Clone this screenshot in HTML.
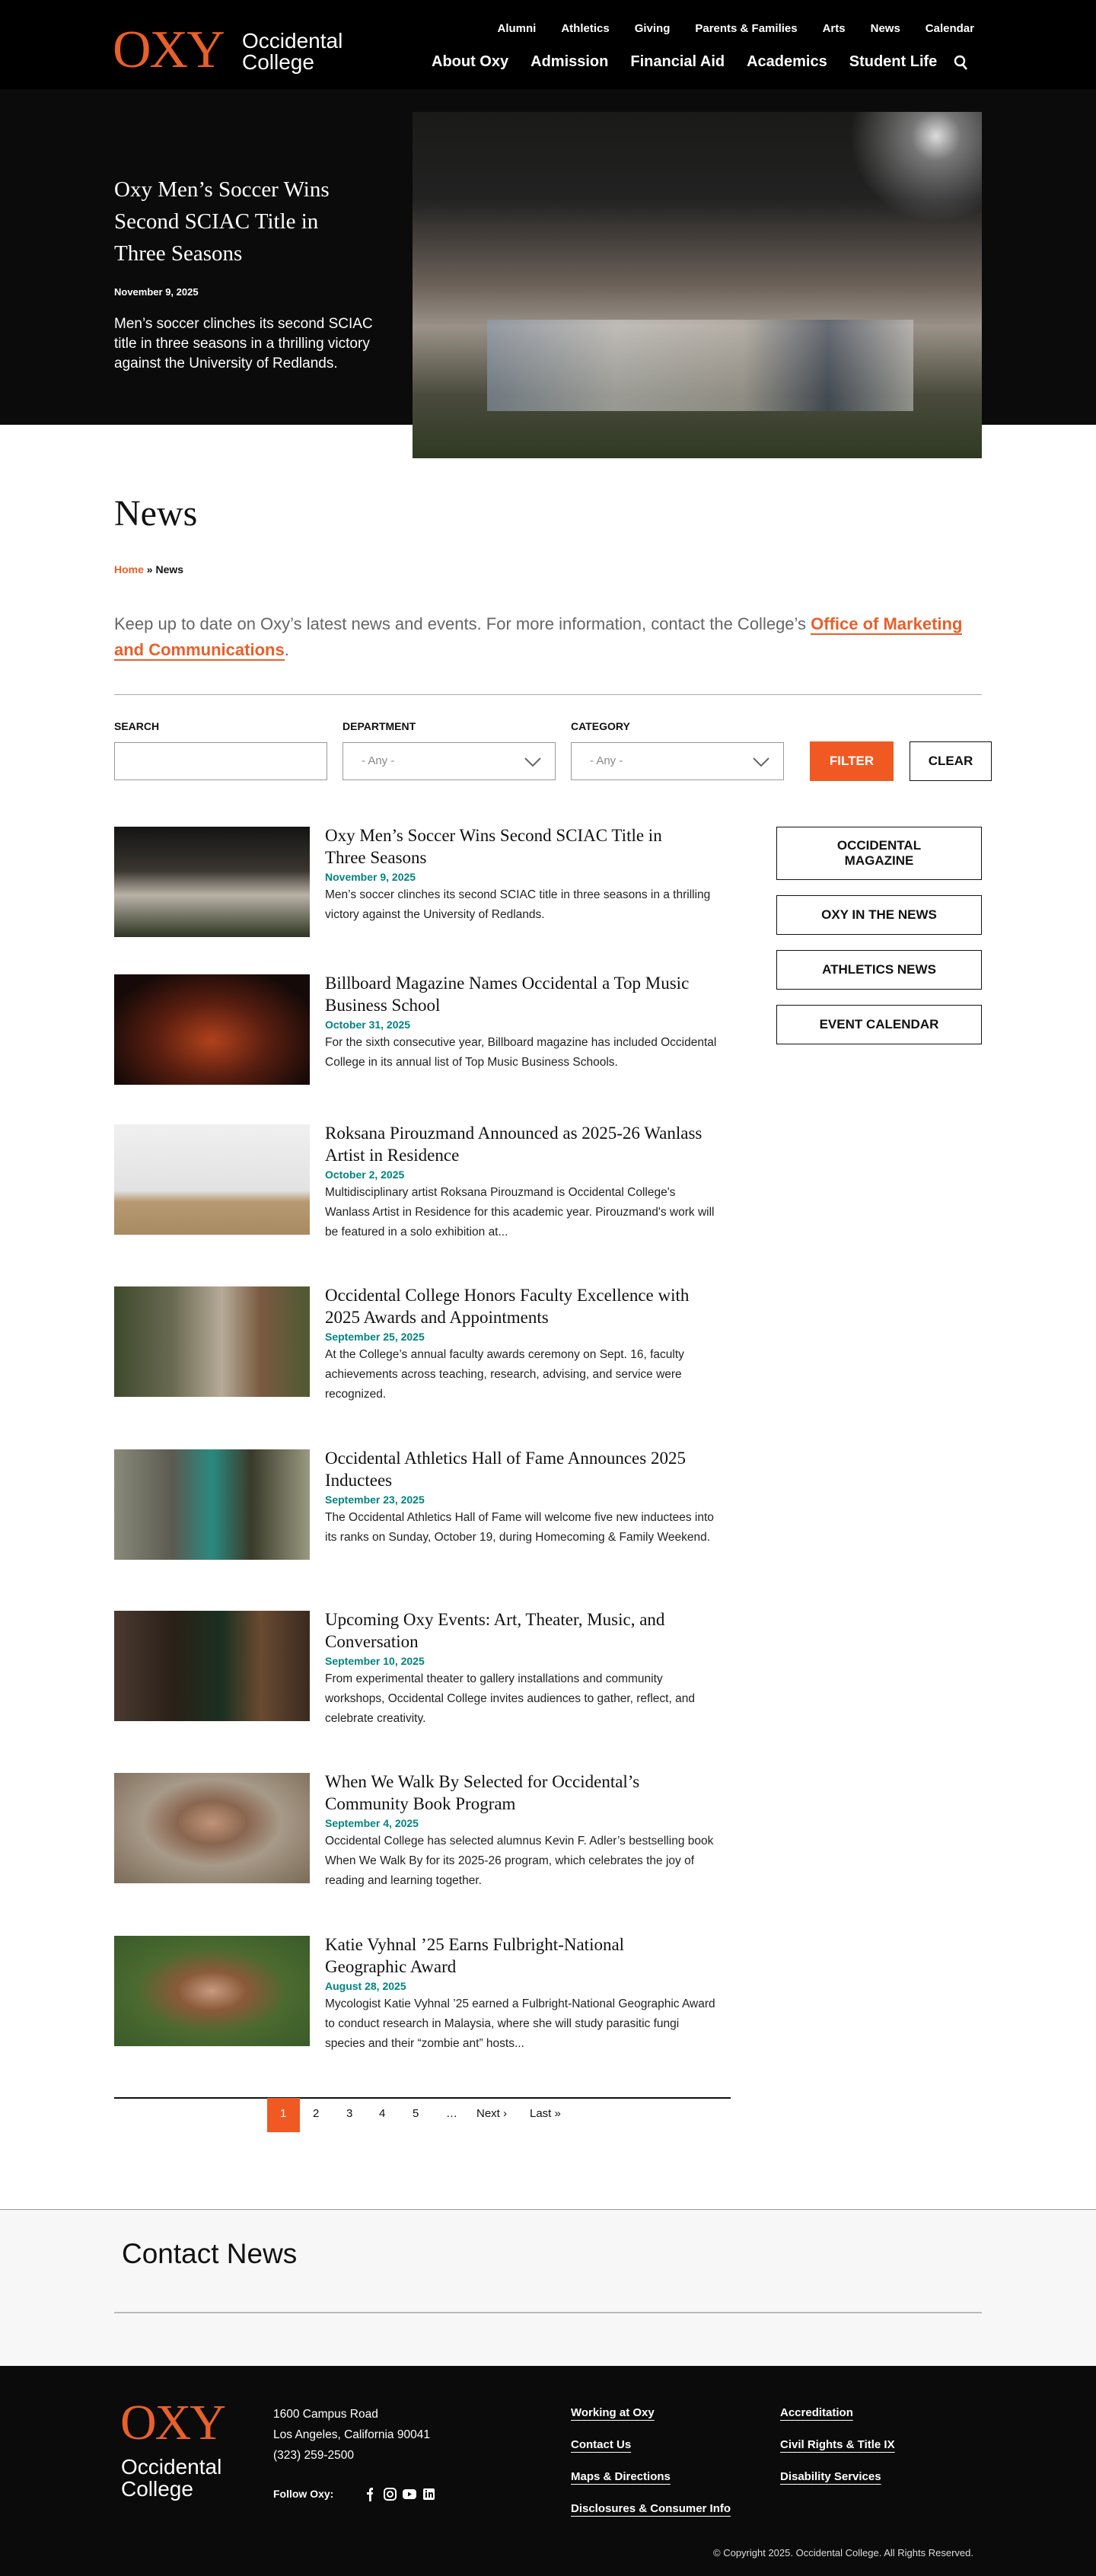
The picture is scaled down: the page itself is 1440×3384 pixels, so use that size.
<!DOCTYPE html>
<html><head><meta charset="utf-8"><style>
*{margin:0;padding:0;box-sizing:border-box}
body{width:1440px;height:3384px;position:relative;background:#fff;font-family:"Liberation Sans",sans-serif;color:#111;overflow:hidden}
.a{position:absolute}
.serif{font-family:"Liberation Serif",serif}
header{position:absolute;left:0;top:0;width:1440px;height:117px;background:#000}
.util{position:absolute;top:29px;right:160px;display:flex;gap:0;font-size:15px;color:#fff;font-weight:bold}
.util span{margin-left:33px}
.main{position:absolute;top:70px;left:567px;display:flex;font-size:20px;color:#fff;font-weight:bold}
.main span{margin-right:29px}
.hero{position:absolute;left:0;top:117px;width:1440px;height:441px;background:#0b0b0b}
.sel{border:1px solid #999;background:#fff;height:50px;top:975px;width:280px;color:#888;font-size:15px;padding:15px 24px}
.item{position:absolute;left:150px;width:810px}
.item .img{position:absolute;left:0;top:0;width:257px;height:145px}
.item .t{position:absolute;left:277px;top:-3px;width:500px;font-family:"Liberation Serif",serif;font-size:23px;line-height:29px;color:#111}
.item .d{color:#00847f;font-weight:bold;font-size:14px;margin-top:1px;font-family:"Liberation Sans",sans-serif;line-height:20px}
.item .s{font-family:"Liberation Sans",sans-serif;font-size:15.5px;line-height:26px;color:#222;margin-top:1px;width:520px}
.box{position:absolute;left:1020px;width:270px;border:1.5px solid #111;font-weight:bold;font-size:17px;text-align:center;display:flex;align-items:center;justify-content:center;line-height:20px}
.pg{position:absolute;top:2768px;font-size:15px}
.fl{position:absolute;color:#fff;font-size:15px;font-weight:bold;text-decoration:underline;text-underline-offset:5px}
</style></head><body>
<header>
 <div class="a serif" style="left:148px;top:30px;font-size:70px;line-height:72px;color:#e8602a;letter-spacing:-2px">OXY</div>
 <div class="a" style="left:318px;top:40px;font-size:28px;line-height:28px;color:#fff">Occidental<br>College</div>
 <div class="util"><span>Alumni</span><span>Athletics</span><span>Giving</span><span>Parents &amp; Families</span><span>Arts</span><span>News</span><span>Calendar</span></div>
 <div class="main"><span>About Oxy</span><span>Admission</span><span>Financial Aid</span><span>Academics</span><span style="margin-right:22px">Student Life</span>
 <svg width="20" height="22" viewBox="0 0 20 22" style="margin-top:2px"><circle cx="8" cy="8" r="6" stroke="#fff" stroke-width="2.4" fill="none"/><line x1="12" y1="13" x2="17" y2="19" stroke="#fff" stroke-width="2.6"/></svg></div>
</header>
<div class="hero"></div>
<div class="a serif" style="left:150px;top:228px;width:330px;font-size:29px;line-height:42px;color:#fff">Oxy Men’s Soccer Wins Second SCIAC Title in Three Seasons</div>
<div class="a" style="left:150px;top:376px;font-size:13px;font-weight:bold;color:#fff">November 9, 2025</div>
<div class="a" style="left:150px;top:413px;width:360px;font-size:19px;line-height:26px;color:#fff">Men’s soccer clinches its second SCIAC title in three seasons in a thrilling victory against the University of Redlands.</div>
<div class="a" style="left:542px;top:147px;width:748px;height:455px;background:radial-gradient(circle at 92% 7%,#ddd 0,#777 4%,transparent 14%),linear-gradient(180deg,#1a1a18 0%,#222 25%,#6b6158 50%,#9a9288 62%,#4a4a3c 82%,#2e3a22 100%)"></div>
<div class="a" style="left:640px;top:420px;width:560px;height:120px;background:linear-gradient(90deg,#8fa0b8,#ddd 30%,#c9c4bd 60%,#3d4b63 80%,#ccc);opacity:.55"></div>

<div class="a serif" style="left:150px;top:645px;font-size:48px;line-height:60px">News</div>
<div class="a" style="left:150px;top:740px;font-size:14px;font-weight:bold"><span style="color:#e8602a">Home</span> » News</div>
<div class="a" style="left:150px;top:803px;width:1150px;font-size:22px;line-height:34px;color:#666">Keep up to date on Oxy’s latest news and events. For more information, contact the College’s <span style="color:#e8602a;font-weight:bold;border-bottom:2px solid #e8602a">Office of Marketing and Communications</span>.</div>
<div class="a" style="left:150px;top:912px;width:1140px;height:1px;background:#aaa"></div>
<div class="a" style="left:150px;top:946px;font-size:14px;font-weight:bold">SEARCH</div>
<div class="a" style="left:450px;top:946px;font-size:14px;font-weight:bold">DEPARTMENT</div>
<div class="a" style="left:750px;top:946px;font-size:14px;font-weight:bold">CATEGORY</div>
<div class="a sel" style="left:150px"></div>
<div class="a sel" style="left:450px">- Any -<svg class="a" style="right:18px;top:18px" width="22" height="14"><path d="M1 2L11 12L21 2" stroke="#666" stroke-width="2" fill="none"/></svg></div>
<div class="a sel" style="left:750px">- Any -<svg class="a" style="right:18px;top:18px" width="22" height="14"><path d="M1 2L11 12L21 2" stroke="#666" stroke-width="2" fill="none"/></svg></div>
<div class="a" style="left:1064px;top:974px;width:110px;height:52px;background:#f05a22;color:#fff;font-weight:bold;font-size:17px;text-align:center;line-height:52px">FILTER</div>
<div class="a" style="left:1195px;top:974px;width:108px;height:52px;border:1.5px solid #111;font-weight:bold;font-size:17px;text-align:center;line-height:49px">CLEAR</div>

<div class="item" style="top:1086px"><div class="img" style="background:linear-gradient(180deg,#141414,#3a3630 40%,#b9b2a6 62%,#2d3522)"></div><div class="t">Oxy Men’s Soccer Wins Second SCIAC Title in Three Seasons<div class="d">November 9, 2025</div><div class="s">Men’s soccer clinches its second SCIAC title in three seasons in a thrilling victory against the University of Redlands.</div></div></div>
<div class="item" style="top:1280px"><div class="img" style="background:radial-gradient(ellipse at 50% 60%,#b0421c 0,#5a1e10 40%,#160a08 80%)"></div><div class="t">Billboard Magazine Names Occidental a Top Music Business School<div class="d">October 31, 2025</div><div class="s">For the sixth consecutive year, Billboard magazine has included Occidental College in its annual list of Top Music Business Schools.</div></div></div>
<div class="item" style="top:1477px"><div class="img" style="background:linear-gradient(180deg,#f0f0f0,#e2e2e2 60%,#b89a72 70%,#a88a62)"></div><div class="t">Roksana Pirouzmand Announced as 2025-26 Wanlass Artist in Residence<div class="d">October 2, 2025</div><div class="s">Multidisciplinary artist Roksana Pirouzmand is Occidental College's Wanlass Artist in Residence for this academic year. Pirouzmand's work will be featured in a solo exhibition at...</div></div></div>
<div class="item" style="top:1690px"><div class="img" style="background:linear-gradient(90deg,#3e4a2c,#6a6a52 30%,#b6ab98 55%,#7a5a40 75%,#4e5a32)"></div><div class="t">Occidental College Honors Faculty Excellence with 2025 Awards and Appointments<div class="d">September 25, 2025</div><div class="s">At the College’s annual faculty awards ceremony on Sept. 16, faculty achievements across teaching, research, advising, and service were recognized.</div></div></div>
<div class="item" style="top:1904px"><div class="img" style="background:linear-gradient(90deg,#8a8a7a,#5b5a50 30%,#2a8a80 50%,#3a3a2a 70%,#9a9a82)"></div><div class="t">Occidental Athletics Hall of Fame Announces 2025 Inductees<div class="d">September 23, 2025</div><div class="s">The Occidental Athletics Hall of Fame will welcome five new inductees into its ranks on Sunday, October 19, during Homecoming &amp; Family Weekend.</div></div></div>
<div class="item" style="top:2116px"><div class="img" style="background:linear-gradient(90deg,#4a3a30,#2a2018 30%,#1a3020 55%,#6a4a30 75%,#3a2a20)"></div><div class="t">Upcoming Oxy Events: Art, Theater, Music, and Conversation<div class="d">September 10, 2025</div><div class="s">From experimental theater to gallery installations and community workshops, Occidental College invites audiences to gather, reflect, and celebrate creativity.</div></div></div>
<div class="item" style="top:2329px"><div class="img" style="background:radial-gradient(ellipse at 50% 45%,#c09478 0,#8a6650 25%,#a89a88 50%,#7a6a58)"></div><div class="t">When We Walk By Selected for Occidental’s Community Book Program<div class="d">September 4, 2025</div><div class="s">Occidental College has selected alumnus Kevin F. Adler’s bestselling book When We Walk By for its 2025-26 program, which celebrates the joy of reading and learning together.</div></div></div>
<div class="item" style="top:2543px"><div class="img" style="background:radial-gradient(ellipse at 50% 50%,#c89a80 0,#8a5a3a 25%,#4a6a30 55%,#3a5a2a)"></div><div class="t">Katie Vyhnal ’25 Earns Fulbright-National Geographic Award<div class="d">August 28, 2025</div><div class="s">Mycologist Katie Vyhnal ’25 earned a Fulbright-National Geographic Award to conduct research in Malaysia, where she will study parasitic fungi species and their “zombie ant” hosts...</div></div></div>

<div class="box" style="top:1086px;height:70px">OCCIDENTAL<br>MAGAZINE</div>
<div class="box" style="top:1176px;height:52px">OXY IN THE NEWS</div>
<div class="box" style="top:1248px;height:52px">ATHLETICS NEWS</div>
<div class="box" style="top:1320px;height:52px">EVENT CALENDAR</div>

<div class="a" style="left:150px;top:2755px;width:810px;height:2px;background:#111"></div>
<div class="a" style="left:351px;top:2756px;width:43px;height:45px;background:#f05a22"></div>
<div class="pg" style="left:368px;color:#fff">1</div>
<div class="pg" style="left:411px">2</div>
<div class="pg" style="left:455px">3</div>
<div class="pg" style="left:498px">4</div>
<div class="pg" style="left:542px">5</div>
<div class="pg" style="left:586px">…</div>
<div class="pg" style="left:626px">Next ›</div>
<div class="pg" style="left:696px">Last »</div>

<div class="a" style="left:0;top:2902px;width:1440px;height:206px;background:#f7f7f7;border-top:1px solid #999"></div>
<div class="a" style="left:160px;top:2938px;font-size:37px;line-height:46px">Contact News</div>
<div class="a" style="left:150px;top:3037px;width:1140px;height:2px;background:#bbb"></div>

<div class="a" style="left:0;top:3108px;width:1440px;height:276px;background:#0b0b0b"></div>
<div class="a serif" style="left:158px;top:3148px;font-size:66px;line-height:70px;color:#e8602a;letter-spacing:-2px">OXY</div>
<div class="a" style="left:159px;top:3226px;font-size:28px;line-height:29px;color:#fff">Occidental<br>College</div>
<div class="a" style="left:359px;top:3158px;font-size:15.5px;line-height:27px;color:#fff">1600 Campus Road<br>Los Angeles, California 90041<br>(323) 259-2500</div>
<div class="a" style="left:359px;top:3268px;font-size:14px;font-weight:bold;color:#fff">Follow Oxy:</div>
<svg class="a" style="left:475px;top:3266px" width="120" height="22" viewBox="0 0 120 22">
<path d="M10 20V11H7V8H10V5.5C10 3 11.5 2 13.5 2H15V5H13.6C12.9 5 12.8 5.4 12.8 6V8H15L14.6 11H12.8V20Z" fill="#fff"/>
<rect x="30" y="3" width="15" height="15" rx="4" fill="none" stroke="#fff" stroke-width="2"/><circle cx="37.5" cy="10.5" r="3.5" fill="none" stroke="#fff" stroke-width="2"/>
<rect x="54" y="4" width="18" height="13" rx="4" fill="#fff"/><path d="M61 7.5V13.5L66 10.5Z" fill="#0b0b0b"/>
<rect x="81" y="3" width="15" height="15" rx="2" fill="#fff"/><rect x="84" y="8" width="2" height="7" fill="#0b0b0b"/><rect x="84" y="5" width="2" height="2" fill="#0b0b0b"/><path d="M88 8H90V9C91 7.5 94 7.5 94 10V15H92V11C92 9.5 90 9.5 90 11V15H88Z" fill="#0b0b0b"/>
</svg>
<div class="fl" style="left:750px;top:3161px">Working at Oxy</div>
<div class="fl" style="left:750px;top:3203px">Contact Us</div>
<div class="fl" style="left:750px;top:3245px">Maps &amp; Directions</div>
<div class="fl" style="left:750px;top:3287px">Disclosures &amp; Consumer Info</div>
<div class="fl" style="left:1025px;top:3161px">Accreditation</div>
<div class="fl" style="left:1025px;top:3203px">Civil Rights &amp; Title IX</div>
<div class="fl" style="left:1025px;top:3245px">Disability Services</div>
<div class="a" style="right:161px;top:3346px;font-size:13px;color:#ddd">© Copyright 2025. Occidental College. All Rights Reserved.</div>
</body></html>
